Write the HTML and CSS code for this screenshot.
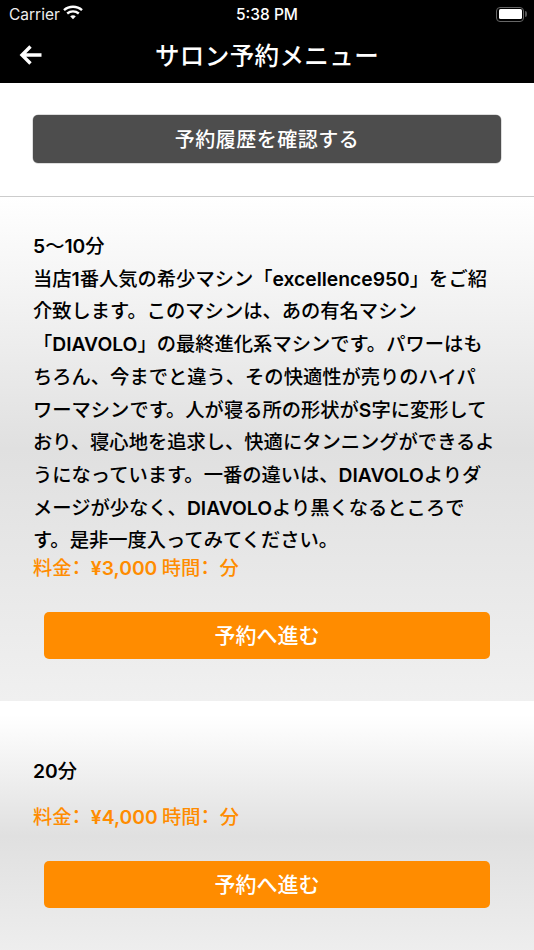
FILE: index.html
```html
<!DOCTYPE html>
<html lang="ja">
<head>
<meta charset="utf-8">
<title>サロン予約メニュー</title>
<link rel="stylesheet" href="styles.css">
</head>
<body>
<div class="screen">
  <header class="header">
    <div class="status">
      <div class="status-left">
        <span class="carrier">Carrier</span>
        <svg class="wifi" viewBox="0 0 20 15" width="20" height="15"><path d="M1 5.200C6 .6 14 .6 19 5.200" fill="none" stroke="#fff" stroke-width="2.400"/><path d="M4.200 8.500c3.400-2.900 8.200-2.900 11.600 0" fill="none" stroke="#fff" stroke-width="2.400"/><path d="M7.200 11.200c1.700-1.300 3.900-1.300 5.600 0L10 14.300z" fill="#fff"/></svg>
      </div>
      <span class="clock">5:38 PM</span>
      <div class="battery"><span class="battery-fill"></span></div>
    </div>
    <div class="navbar">
      <svg class="back" viewBox="0 0 24 22" width="24" height="22"><path d="M22.500 11H3.500M11.500 2.500L3 11l8.500 8.500" fill="none" stroke="#fff" stroke-width="3.400"/></svg>
      <h1 class="title">サロン予約メニュー</h1>
    </div>
  </header>
  <div class="history-wrap">
    <a class="btn btn-dark">予約履歴を確認する</a>
  </div>
  <section class="item item-first">
    <p class="desc"><b>5</b>～<b>10</b>分<br>当店<b>1</b>番人気の希少マシン「<b>excellence950</b>」をご紹<br>介致します。このマシンは、あの有名マシン<br>「<b>DIAVOLO</b>」の最終進化系マシンです。パワーはも<br>ちろん、今までと違う、その快適性が売りのハイパ<br>ワーマシンです。人が寝る所の形状が<b>S</b>字に変形して<br>おり、寝心地を追求し、快適にタンニングができるよ<br>うになっています。一番の違いは、<b>DIAVOLO</b>よりダ<br>メージが少なく、<b>DIAVOLO</b>より黒くなるところで<br>す。是非一度入ってみてください。</p>
    <p class="price">料金<span class="colon">：</span><b>¥3,000</b> 時間<span class="colon">：</span>分</p>
    <a class="btn btn-orange">予約へ進む</a>
  </section>
  <section class="item item-second">
    <p class="desc"><b>20</b>分</p>
    <p class="price price-second">料金<span class="colon">：</span><b>¥4,000</b> 時間<span class="colon">：</span>分</p>
    <a class="btn btn-orange">予約へ進む</a>
  </section>
</div>
</body>
</html>
```
FILE: styles.css
```css
* { box-sizing: border-box; margin: 0; padding: 0; }
html, body { width: 534px; height: 950px; overflow: hidden; background: #fff; }
body { font-family: "Inter", "Noto Sans CJK JP", sans-serif; color: #000; }
.screen { height: 950px; overflow: hidden; }
.header { background: #000; color: #fff; height: 83px; }
.status { height: 28px; position: relative; display: flex; align-items: center; justify-content: space-between; padding: 0 5px 0 9px; }
.status-left { display: flex; align-items: center; gap: 3px; }
.carrier { font: 400 15.500px "Inter", sans-serif; color: #eee; }
.wifi { display: block; margin-top: -4px; }
.clock { position: absolute; left: 0; right: 0; text-align: center; font: 500 15.500px "Inter", sans-serif; pointer-events: none; }
.battery { width: 28px; height: 15px; border: 1.500px solid #666; border-radius: 4px; padding: 1.500px; margin-right: 5px; position: relative; }
.battery::after { content: ""; position: absolute; right: -4px; top: 3px; width: 2px; height: 6px; background: #555; border-radius: 0 2px 2px 0; }
.battery-fill { display: block; height: 100%; background: #fff; border-radius: 1.500px; }
.navbar { height: 55px; position: relative; display: flex; align-items: center; justify-content: center; }
.back { position: absolute; left: 19px; top: 16px; }
.title { font: 500 24.500px "Noto Sans CJK JP", sans-serif; letter-spacing: 0.400px; margin-top: -2px; }
.history-wrap { height: 114px; padding: 32px 33px 0; border-bottom: 1.500px solid #ccc; }
.btn { display: flex; align-items: center; justify-content: center; color: #fff; font: 500 21px "Noto Sans CJK JP", sans-serif; }
.btn-dark { height: 48px; background: #4d4d4d; border-radius: 5px; box-shadow: 0 0 0 0.500px #bbb; font-size: 20px; letter-spacing: 0.500px; padding-bottom: 2px; }
.btn-orange { height: 47px; margin: 0 11px; background: #ff8c00; border-radius: 5px; padding-bottom: 3px; }
.item { padding: 0 33px; }
.item-first { height: 504px; padding-top: 32px; background: linear-gradient(#fff, #e0e0e0 50%, #f0f0f0); }
.item-second { height: 270px; padding-top: 53px; background: linear-gradient(#fff 5%, #e0e0e0 50%, #f0f0f0); }
.desc { font: 500 19.300px/32.700px "Noto Sans CJK JP", sans-serif; white-space: nowrap; }
.desc b, .price b { font-family: "Inter", sans-serif; font-weight: 600; line-height: 1; }
.price { font: 500 19.300px/22px "Noto Sans CJK JP", sans-serif; color: #ff8c00; margin-bottom: 34px; }
.colon { font-feature-settings: "halt"; padding-right: 9.650px; }
.price-second { margin-top: 18px; }
```
